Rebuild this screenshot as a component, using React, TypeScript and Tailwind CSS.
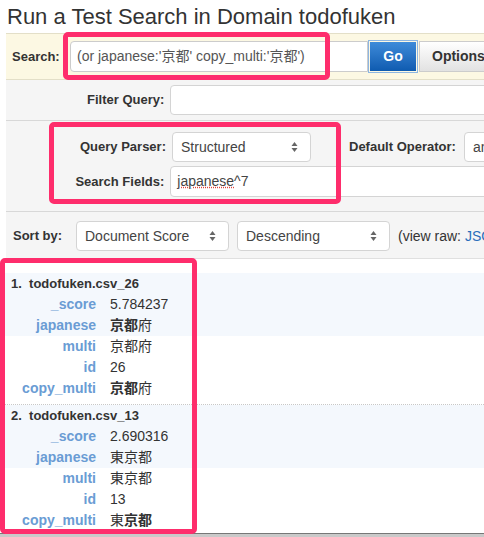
import React from 'react';

const PINK = 'border-[#fe2d6c]';

const Arrows = () => (
    <svg width="7" height="12" viewBox="0 0 7 12" className="shrink-0">
        <path d="M3.5 1 L6.5 5 L0.5 5 Z" fill="#666" />
        <path d="M3.5 11 L6.5 7 L0.5 7 Z" fill="#666" />
    </svg>
);

const Select = ({ label, className }: { label: string; className: string }) => (
    <div className={`h-[30px] bg-white border border-[#d4d4d4] rounded-[4px] flex items-center justify-between pl-2 pr-3 text-[14px] text-[#444] ${className}`}>
        <span>{label}</span>
        <Arrows />
    </div>
);

type Row = { key: string; value: React.ReactNode };

const RESULTS: { title: string; rows: Row[] }[] = [
    {
        title: '1.  todofuken.csv_26',
        rows: [
            { key: '_score', value: '5.784237' },
            { key: 'japanese', value: <><b>京都</b>府</> },
            { key: 'multi', value: '京都府' },
            { key: 'id', value: '26' },
            { key: 'copy_multi', value: <><b>京都</b>府</> },
        ],
    },
    {
        title: '2.  todofuken.csv_13',
        rows: [
            { key: '_score', value: '2.690316' },
            { key: 'japanese', value: '東京都' },
            { key: 'multi', value: '東京都' },
            { key: 'id', value: '13' },
            { key: 'copy_multi', value: <>東<b>京都</b></> },
        ],
    },
];

export default function App() {
    return (
        <div className="relative w-[484px] h-[537px] overflow-hidden bg-white text-[#333] font-['Liberation_Sans','Noto_Sans_CJK_JP',sans-serif]">
            <h1 className="pl-[7px] pt-[4px] h-[33px] text-[22px] leading-[26px] text-[#333] whitespace-nowrap">
                Run a Test Search in Domain todofuken
            </h1>

            {/* search bar */}
            <div className="ml-[6px] w-[560px] h-[47px] bg-[#fcf8e3] border-t border-b border-[#e3dfc8] flex items-center pl-[6px] gap-[5px]">
                <span className="text-[13px] font-bold w-[53px]">Search:</span>
                <div className="w-[298px] h-[31px] bg-white border border-[#ccc] rounded-l-[4px] flex items-center pl-[6px] text-[14px] text-[#555] whitespace-nowrap">
                    (or japanese:'京都' copy_multi:'京都')
                </div>
                <div className="-ml-[5px] h-[33px] w-[50px] border border-[#8db6e2] p-[1px]">
                    <div className="h-full w-full bg-gradient-to-b from-[#3d8bd9] to-[#0e5bb0] flex items-center justify-center text-white font-bold text-[14px]">
                        Go
                    </div>
                </div>
                <div className="-ml-[4px] h-[31px] w-[110px] border border-[#ccc] bg-gradient-to-b from-white to-[#e2e2e2] flex items-center pl-[12px] font-bold text-[14px] text-[#333]">
                    Options
                </div>
            </div>

            {/* query options */}
            <div className="ml-[6px] w-[560px] bg-[#f5f5f5] border-b border-[#e0e0e0]">
                <div className="h-[41px] flex items-center border-b border-[#d8d8d8]">
                    <span className="w-[160px] text-right text-[13px] font-bold">Filter Query:</span>
                    <div className="ml-[6px] w-[400px] h-[30px] bg-white border border-[#d4d4d4] rounded-[4px]" />
                </div>
                <div className="pt-[11px] pb-[14px] flex flex-col gap-[4px] border-b border-[#d8d8d8]">
                    <div className="flex items-center">
                        <span className="w-[160px] text-right text-[13px] font-bold">Query Parser:</span>
                        <Select label="Structured" className="ml-[6px] w-[139px]" />
                        <span className="ml-[38px] text-[13px] font-bold whitespace-nowrap">Default Operator:</span>
                        <Select label="and" className="ml-[8px] w-[80px]" />
                    </div>
                    <div className="flex items-center">
                        <span className="w-[160px] text-right text-[13px] font-bold">Search Fields:</span>
                        <div className="ml-[6px] w-[400px] h-[31px] bg-white border border-[#d4d4d4] rounded-[4px] flex items-center pl-[6px] text-[14px] text-[#444]">
                            <span className="underline decoration-dotted decoration-[#e0443c]">japanese</span>^7
                        </div>
                    </div>
                </div>
                <div className="h-[46px] flex items-center pl-[7px] pt-[2px]">
                    <span className="text-[13px] font-bold w-[63px]">Sort by:</span>
                    <Select label="Document Score" className="w-[153px]" />
                    <Select label="Descending" className="ml-[8px] w-[153px]" />
                    <span className="ml-[8px] text-[14px] text-[#333] whitespace-nowrap">
                        (view raw: <span className="text-[#2a6ebb]">JSON</span>)
                    </span>
                </div>
            </div>

            {/* results */}
            <div className="pt-[14px] w-[484px]">
                {RESULTS.map((r, i) => (
                    <div key={r.title} className={i > 0 ? 'border-t border-dotted border-[#c8c8c8]' : 'pb-[5px]'}>
                        <div className="bg-[#f4f8fd]">
                            <div className="h-[21px] flex items-center pl-[11px] text-[13px] font-bold whitespace-pre">{r.title}</div>
                            {r.rows.slice(0, 2).map(row => (
                                <ResultRow key={row.key} row={row} />
                            ))}
                        </div>
                        {r.rows.slice(2).map(row => (
                            <ResultRow key={row.key} row={row} />
                        ))}
                    </div>
                ))}
            </div>

            <div className="absolute left-0 right-0 top-[533px] h-[4px] bg-[#c9c9c9] border-t border-[#777]" />

            {/* highlight boxes */}
            <div className={`absolute left-[63px] top-[32px] w-[267px] h-[48px] border-[5px] ${PINK} rounded-[5px]`} />
            <div className={`absolute left-[49px] top-[122px] w-[292px] h-[82px] border-[5px] ${PINK} rounded-[5px]`} />
            <div className={`absolute left-0 top-[258px] w-[197px] h-[276px] border-[5px] ${PINK} rounded-[5px]`} />
        </div>
    );
}

const ResultRow = ({ row }: { row: Row }) => (
    <div className="h-[21px] flex items-center text-[14px]">
        <span className="w-[96px] text-right font-bold text-[#6a9cd4]">{row.key}</span>
        <span className="ml-[14px] text-[#333]">{row.value}</span>
    </div>
);
